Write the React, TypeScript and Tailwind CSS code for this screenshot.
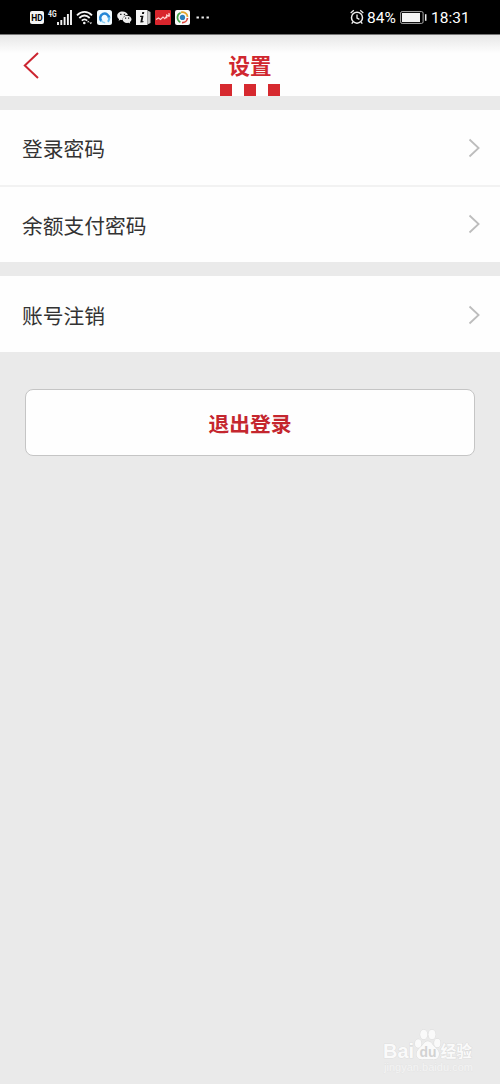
import type { ReactNode } from "react"

interface SettingRowProps {
  label: string
  className?: string
}

function SettingRow({ label, className = "" }: SettingRowProps) {
  return (
    <button className={`flex w-full items-center justify-between bg-[#fefefe] pl-[22px] pr-5 text-left ${className}`}>
      <span className="text-[20.75px] leading-7 text-[#333]">{label}</span>
      <svg className="mb-px h-5 w-3" viewBox="0 0 12 20" fill="none" stroke="#bdbdbd" strokeWidth="1.8">
        <path d="M1.5 1.5L10.6 10L1.5 18.5" />
      </svg>
    </button>
  )
}

function StatusIcon({ className, viewBox, children }: { className: string; viewBox: string; children: ReactNode }) {
  return (
    <svg className={`shrink-0 ${className}`} viewBox={viewBox} fill="none">
      {children}
    </svg>
  )
}

function StatusBar() {
  return (
    <div className="flex h-[35px] items-center border-b border-[#777] bg-black pl-[30px] pr-[30px] font-[Roboto] text-white">
      <StatusIcon className="h-[13px] w-[14px]" viewBox="0 0 14 13">
        <rect width="14" height="13" rx="2" fill="#f4f4f4" />
        <text x="7" y="9.9" textAnchor="middle" textLength="11.5" lengthAdjust="spacingAndGlyphs" fill="#000" fontSize="9.2" fontWeight="bold">HD</text>
      </StatusIcon>
      <StatusIcon className="mb-[7px] ml-[3px] h-3 w-[10px] overflow-visible" viewBox="0 0 10 12">
        <text x="1" y="9" textLength="8.5" lengthAdjust="spacingAndGlyphs" fill="#eee" fontSize="8.2" fontWeight="bold">4G</text>
      </StatusIcon>
      <StatusIcon className="h-[15px] w-[15px]" viewBox="0 0 15 15">
        <path d="M1 15v-3M4.3 15v-5M7.6 15V7M10.9 15V4M14 15V0" stroke="#f4f4f4" strokeWidth="1.9" />
      </StatusIcon>
      <StatusIcon className="ml-1 h-[15px] w-[17px]" viewBox="0 0 17 15">
        <path d="M1 5.3C5.4.8 11.6.8 16 5.3M3.3 8C6.6 4.8 10.4 4.8 13.7 8M5.8 10.7c1.9-1.8 3.5-1.8 5.4 0" stroke="#f4f4f4" strokeWidth="1.8" />
        <circle cx="8.3" cy="13" r="1.3" fill="#f4f4f4" />
        <path d="M11 12.2l1.3-1.5 1.3 1.5zM13.5 12.6h2.6l-1.3 1.7z" fill="#f4f4f4" />
      </StatusIcon>
      <StatusIcon className="ml-1 h-[15px] w-[15px]" viewBox="0 0 15 15">
        <rect width="15" height="15" rx="2.5" fill="#f2fbff" />
        <path d="M4.6 11.2A4.4 4.4 0 1 1 12 8.2" stroke="#2386d6" strokeWidth="2.5" />
        <path d="M12.2 7.2c.2 1.8-.3 3.4-1.2 4.6" stroke="#62baf0" strokeWidth="2" />
        <path d="M4.2 10.6c1 1.4 2.3 2.1 4 2.2" stroke="#8fd0f5" strokeWidth="1.4" />
      </StatusIcon>
      <StatusIcon className="ml-[5px] h-[13px] w-[15px]" viewBox="0 0 15 13">
        <path d="M5.5.5C2.4.5.2 2.4.2 4.8c0 1.4.7 2.5 1.9 3.3l-.5 1.7 2-1c.6.2 1.2.3 2 .3-.2-3 2-5 5.3-5.1C10.3 1.8 8.2.5 5.5.5z" fill="#ededed" />
        <path d="M10 4.7c-2.6 0-4.4 1.6-4.4 3.6S7.4 12 10 12l1.5-.3 1.7.9-.4-1.5c1.1-.7 1.7-1.6 1.7-2.8 0-2-1.9-3.6-4.5-3.6z" fill="#ededed" />
        <path d="M3.1 3.4h1.4M6.8 3.4h1.3M8 7.2h1.2M11 7.2h1.2" stroke="#222" strokeWidth="1.2" />
      </StatusIcon>
      <StatusIcon className="ml-1 h-[15px] w-[15px]" viewBox="0 0 15 15">
        <path d="M0 0h11.5v15H0z" fill="#f4f4f4" />
        <path d="M11.5 .5l3 1.5v11l-3 1.5z" fill="#c5c5c5" />
        <path d="M6.3 2h2l-.4 2H5.9zM4.2 5.8h3.3L6.4 11.2l1.2-.2-.3 1.2-3 .3 1.1-5.4H4z" fill="#111" />
      </StatusIcon>
      <StatusIcon className="ml-1 h-[15px] w-4" viewBox="0 0 16 15">
        <rect width="16" height="15" rx="1" fill="#d9252c" />
        <path d="M1 9.6l2.5-1.6 2 1.5 2.5-2.5 1.8 1.7 2-2.6L15 5M11.7 4.2v4M14 3v4" stroke="#ffd1cf" strokeWidth="1.2" />
      </StatusIcon>
      <StatusIcon className="ml-[4px] h-[15px] w-[15px]" viewBox="0 0 15 15">
        <rect width="15" height="15" rx="2" fill="#fafafa" />
        <path d="M5.4 12.2A5.2 5.2 0 0 1 5.6 2.7" stroke="#43a447" strokeWidth="1.7" />
        <path d="M6 2.4a5.2 5.2 0 0 1 6.6 4.4" stroke="#e4a52c" strokeWidth="1.7" />
        <path d="M12.5 8a5.2 5.2 0 0 1-5.5 4.6" stroke="#db473d" strokeWidth="1.7" />
        <circle cx="7.5" cy="7.4" r="2.6" fill="#2b7fbd" />
      </StatusIcon>
      <StatusIcon className="ml-[6px] h-[3px] w-[14px]" viewBox="0 0 14 3">
        <path d="M.5 1.5h2.4M5.5 1.5h2.4M10.5 1.5h2.4" stroke="#eee" strokeWidth="2" />
      </StatusIcon>

      <StatusIcon className="ml-auto h-4 w-[14px]" viewBox="0 0 14 16">
        <circle cx="7" cy="8.7" r="5.5" stroke="#eee" strokeWidth="1.5" />
        <path d="M7 5.5v3.6l2.4 1.3M.7 4L3.8 1.3M13.3 4l-3.1-2.7M3 13l-1.3 1.7M11 13l1.3 1.7" stroke="#eee" strokeWidth="1.3" />
      </StatusIcon>
      <span className="ml-[3px] w-[30px] whitespace-nowrap pt-[3px] text-[15.5px] leading-none">84%</span>
      <StatusIcon className="ml-[3px] h-[13px] w-[27px]" viewBox="0 0 27 13">
        <rect x=".6" y=".6" width="22.5" height="11.8" rx="1.5" stroke="#aaa" />
        <rect x="2" y="2" width="18" height="9" fill="#f4f4f4" />
        <path d="M25.7 3.2v6.6" stroke="#eee" strokeWidth="1.5" />
      </StatusIcon>
      <span className="ml-1 w-[39px] whitespace-nowrap pt-[3px] text-[15.5px] leading-none">18:31</span>
    </div>
  )
}

function Watermark() {
  return (
    <svg
      className="absolute bottom-[8px] left-[382px] h-[48px] w-[94px]"
      viewBox="0 0 94 48"
      fill="#fafafa"
      stroke="#d6d6d6"
      strokeWidth=".7"
      paintOrder="stroke"
      fontFamily="Liberation Sans"
    >
      <text x="1" y="29.7" textLength="31" lengthAdjust="spacingAndGlyphs" fontSize="19.5" fontWeight="bold">Bai</text>
      <ellipse cx="36.2" cy="15.5" rx="3.2" ry="4.3" />
      <ellipse cx="41.8" cy="6.5" rx="3.6" ry="4.8" />
      <ellipse cx="50" cy="6.5" rx="3.6" ry="4.8" />
      <ellipse cx="55.3" cy="15" rx="3.2" ry="4.3" />
      <path d="M41.5 15.8c2-3.5 6.5-3.5 8.5 0s7 5.5 7 10-3.5 6.2-7 5.5h-8c-4 .7-7.5-1-7.5-5.3 0-4.4 5-6.7 7-10.2z" />
      <text x="37.5" y="28.5" textLength="17" lengthAdjust="spacingAndGlyphs" fill="#d2d2d2" stroke="none" fontSize="14" fontWeight="bold">du</text>
      <text x="58.5" y="29" textLength="31.5" lengthAdjust="spacingAndGlyphs" fontFamily="Noto Sans CJK SC" fontSize="16" fontWeight="bold">经验</text>
      <text x="2" y="43" textLength="89" lengthAdjust="spacingAndGlyphs" fill="#f4f4f4" stroke="#e0e0e0" strokeWidth=".4" fontSize="11">jingyan.baidu.com</text>
    </svg>
  )
}

export default function App() {
  return (
    <div className="relative h-[1084px] w-[500px] overflow-hidden bg-[#eaeaea] font-['Noto_Sans_CJK_SC',sans-serif]">
      <StatusBar />
      <header className="grid h-[61px] grid-cols-[1fr_auto_1fr] bg-linear-to-b from-[#e7e7e7] via-[#fefefe] via-30% to-[#fefefe]">
        <button className="flex items-start pl-[23px] pt-[17px]" aria-label="返回">
          <svg className="h-[27px] w-[16px]" viewBox="0 0 16 27" fill="none" stroke="#cc2530" strokeWidth="2">
            <path d="M15 1L1.8 13.5L15 26" />
          </svg>
        </button>
        <div className="flex flex-col items-center justify-end">
          <h1 className="text-[21.5px] font-bold leading-[30px] text-[#d0272f]">设置</h1>
          <div className="mt-1 flex gap-3">
            <span className="h-3 w-3 bg-[#d6292f]" />
            <span className="h-3 w-3 bg-[#d6292f]" />
            <span className="h-3 w-3 bg-[#d6292f]" />
          </div>
        </div>
      </header>
      <main>
        <section className="mt-[14px]">
          <SettingRow label="登录密码" className="h-[77px] border-b-2 border-[#f2f2f2] pt-px" />
          <SettingRow label="余额支付密码" className="h-[75px]" />
        </section>
        <section className="mt-[14px]">
          <SettingRow label="账号注销" className="h-[76px] pt-[2px]" />
        </section>
        <div className="mt-[37px] px-[25px]">
          <button className="h-[67px] w-full rounded-[8px] border border-[#c5c5c5] bg-[#fefefe] pt-[2px] text-[20.8px] font-bold text-[#c4262e]">
            退出登录
          </button>
        </div>
      </main>
      <Watermark />
    </div>
  )
}
